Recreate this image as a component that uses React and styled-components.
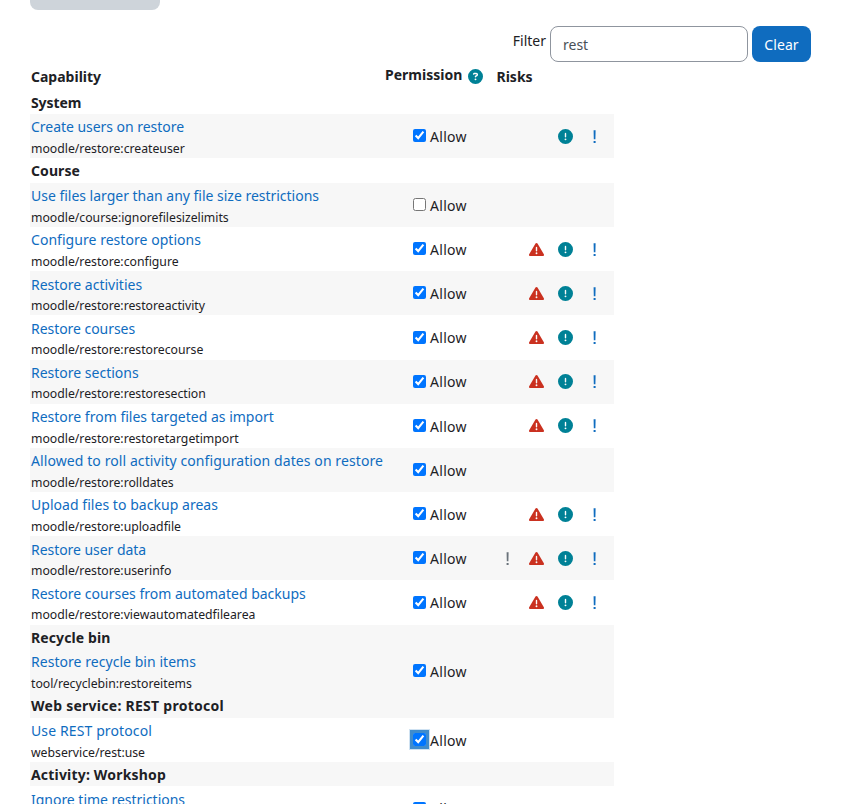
import React from "react";
import styled, { createGlobalStyle } from "styled-components";
import {
  FaCircleExclamation,
  FaCircleQuestion,
  FaTriangleExclamation,
} from "react-icons/fa6";

const GlobalStyle = createGlobalStyle`
  *, *::before, *::after { box-sizing: border-box; }
  html, body { margin: 0; background: #fff; }
  body {
    height: 804px;
    overflow: hidden;
    color: #1d2125;
    font: 400 14px/22.5px "Noto Sans", "Open Sans", sans-serif;
  }
`;

const Page = styled.main`
  width: 847px;
  height: 804px;
  padding: 0 36px 0 30px;
  overflow: hidden;
`;

const TopButton = styled.div`
  width: 130px;
  height: 10px;
  border-radius: 0 0 8px 8px;
  background: #ced4da;
`;

const FilterBar = styled.form`
  display: flex;
  justify-content: flex-end;
  align-items: flex-start;
  height: 36px;
  margin-top: 16px;
`;

const FilterLabel = styled.label`
  margin: 4px 4px 0 0;
`;

const FilterInput = styled.input`
  width: 198px;
  height: 36px;
  margin-right: 4px;
  padding: 0 12px;
  border: 1px solid #8f959e;
  border-radius: 8px;
  outline: none;
  background: #fff;
  color: #495057;
  font: inherit;
`;

const ClearButton = styled.button`
  width: 59px;
  height: 36px;
  padding: 2px 0 0;
  border: 0;
  border-radius: 8px;
  background: #0f6cbf;
  color: #fff;
  font: inherit;
  letter-spacing: 0.1px;
`;

const Table = styled.section`
  width: 584px;
  padding-top: 3px;
`;

const Row = styled.div`
  display: grid;
  grid-template-columns: 354px 111px 119px;
  align-items: center;
  height: 44.18px;
  background: ${(p) => (p.$shaded ? "#f7f7f7" : "transparent")};
`;

const HeadRow = styled(Row)`
  height: 24.7px;
  font-weight: 700;
`;

const HeadCell = styled.div`
  display: flex;
  align-items: center;
  padding-left: 1px;
`;

const PermissionHead = styled(HeadCell)`
  align-self: start;
  line-height: 20.5px;
  svg { margin: 2px 0 0 6px; }
`;

const RisksHead = styled(HeadCell)`
  padding-left: 1.5px;
`;

const Heading = styled.h3`
  height: 24.5px;
  margin: 0;
  padding: 2px 1px 0;
  background: ${(p) => (p.$shaded ? "#f7f7f7" : "transparent")};
  font: inherit;
  font-weight: 700;
  letter-spacing: ${(p) => p.$spacing || 0}px;
`;

const Capability = styled.div`
  padding: 2.3px 1px 0;
  white-space: nowrap;
`;

const CapabilityLink = styled.a`
  display: block;
  height: 22.5px;
  color: #0f6cbf;
  letter-spacing: ${(p) => p.$spacing || 0}px;
`;

const CapabilityName = styled.div`
  font-size: 12.25px;
  line-height: 19.69px;
  letter-spacing: -0.015px;
`;

const Permission = styled.label`
  display: flex;
  align-items: center;
  padding: 1.8px 0 0 29px;
  letter-spacing: 0.3px;
`;

const Checkbox = styled.input`
  width: 13px;
  height: 13px;
  margin: -3px 4px 0 0;
  accent-color: #0075ff;
  outline: none;
  box-shadow: ${(p) => (p.$focused ? "0 0 0 3px #3f8ccc, 0 0 0 4px #cfe2f2" : "none")};
  background: ${(p) => (p.$focused ? "#3f8ccc" : "transparent")};
`;

const Risks = styled.div`
  display: grid;
  grid-template-columns: repeat(4, 28.8px);
  justify-items: center;
  align-items: center;
  margin-left: -1.6px;
`;

const Mark = styled.svg`
  width: 15px;
  height: 15px;
  color: ${(p) => p.$color};
`;

const Exclamation = ({ color }) => (
  <Mark viewBox="0 0 15 15" $color={color} fill="currentColor" aria-hidden="true">
    <path d="M6.6 1.2h2l-.2 9h-1.6zM6.6 12h2v2h-2z" />
  </Mark>
);

const risk = {
  spam: () => <Exclamation color="#6a737b" />,
  xss: () => <FaTriangleExclamation size={15} color="#ca3120" />,
  personal: () => <FaCircleExclamation size={15} color="#008196" />,
  loss: () => <Exclamation color="#0f6cbf" />,
};

const THREE = ["xss", "personal", "loss"];

const groups = [
  {
    title: "System",
    spacing: -0.1,
    rows: [
      { label: "Create users on restore", name: "moodle/restore:createuser", shaded: true, risks: ["personal", "loss"], spacing: -0.037 },
    ],
  },
  {
    title: "Course",
    spacing: 0.08,
    rows: [
      { label: "Use files larger than any file size restrictions", name: "moodle/course:ignorefilesizelimits", shaded: true, unchecked: true, spacing: -0.015 },
      { label: "Configure restore options", name: "moodle/restore:configure", risks: THREE, spacing: 0.043 },
      { label: "Restore activities", name: "moodle/restore:restoreactivity", shaded: true, risks: THREE },
      { label: "Restore courses", name: "moodle/restore:restorecourse", risks: THREE, spacing: -0.05 },
      { label: "Restore sections", name: "moodle/restore:restoresection", shaded: true, risks: THREE },
      { label: "Restore from files targeted as import", name: "moodle/restore:restoretargetimport", risks: THREE },
      { label: "Allowed to roll activity configuration dates on restore", name: "moodle/restore:rolldates", shaded: true, spacing: 0.088 },
      { label: "Upload files to backup areas", name: "moodle/restore:uploadfile", risks: THREE, spacing: 0.041 },
      { label: "Restore user data", name: "moodle/restore:userinfo", shaded: true, risks: ["spam", ...THREE], spacing: -0.05 },
      { label: "Restore courses from automated backups", name: "moodle/restore:viewautomatedfilearea", risks: THREE },
    ],
  },
  {
    title: "Recycle bin",
    shaded: true,
    spacing: 0.11,
    rows: [
      { label: "Restore recycle bin items", name: "tool/recyclebin:restoreitems", shaded: true, spacing: 0.045 },
    ],
  },
  {
    title: "Web service: REST protocol",
    shaded: true,
    spacing: 0.266,
    rows: [
      { label: "Use REST protocol", name: "webservice/rest:use", focused: true, spacing: 0.118 },
    ],
  },
  {
    title: "Activity: Workshop",
    shaded: true,
    spacing: 0.185,
    rows: [
      { label: "Ignore time restrictions", name: "mod/workshop:ignoredeadlines", spacing: -0.024 },
    ],
  },
];

const RISK_ORDER = ["spam", "xss", "personal", "loss"];

function CapabilityRow({ row }) {
  return (
    <Row $shaded={row.shaded}>
      <Capability>
        <CapabilityLink $spacing={row.spacing}>{row.label}</CapabilityLink>
        <CapabilityName>{row.name}</CapabilityName>
      </Capability>
      <Permission>
        <Checkbox type="checkbox" defaultChecked={!row.unchecked} $focused={row.focused} />
        Allow
      </Permission>
      <Risks>
        {RISK_ORDER.map((key) => (
          <React.Fragment key={key}>
            {row.risks?.includes(key) ? risk[key]() : <span />}
          </React.Fragment>
        ))}
      </Risks>
    </Row>
  );
}

export default function App() {
  return (
    <Page>
      <GlobalStyle />
      <TopButton />
      <FilterBar>
        <FilterLabel htmlFor="filter">Filter</FilterLabel>
        <FilterInput id="filter" defaultValue="rest" />
        <ClearButton type="button">Clear</ClearButton>
      </FilterBar>
      <Table>
        <HeadRow>
          <HeadCell>Capability</HeadCell>
          <PermissionHead>
            Permission
            <FaCircleQuestion size={15} color="#008196" />
          </PermissionHead>
          <RisksHead>Risks</RisksHead>
        </HeadRow>
        {groups.map((group) => (
          <React.Fragment key={group.title}>
            <Heading $shaded={group.shaded} $spacing={group.spacing}>
              {group.title}
            </Heading>
            {group.rows.map((row) => (
              <CapabilityRow key={row.name} row={row} />
            ))}
          </React.Fragment>
        ))}
      </Table>
    </Page>
  );
}
